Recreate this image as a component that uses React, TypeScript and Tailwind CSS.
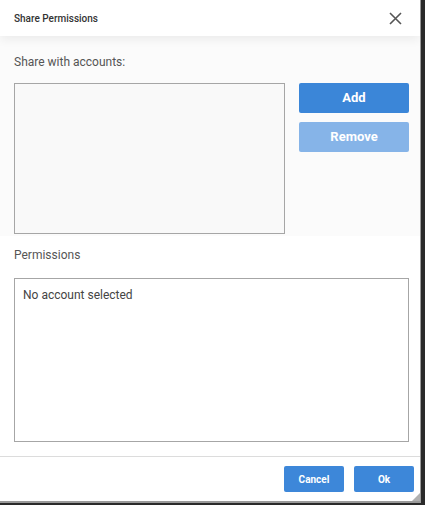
import React from 'react';

export default function App() {
  return (
    <div className="w-[425px] h-[505px] flex bg-[#2a2a2a] font-['Roboto',sans-serif]">
      <div className="w-[421px] h-[503px] flex flex-col bg-white border-r border-b-2 border-[#9a9a9a] relative">
        {/* header */}
        <div className="h-[36px] shrink-0 flex items-center justify-between pl-[14px] pr-[14px] bg-white relative z-10 shadow-[0_3px_10px_rgba(0,0,0,0.07)]">
          <span className="text-[10px] font-medium text-[#333]">Share Permissions</span>
          <svg width="13" height="13" viewBox="0 0 13 13" className="mr-[4px]">
            <path d="M1 1L12 12M12 1L1 12" stroke="#555" strokeWidth="1.6" />
          </svg>
        </div>

        {/* accounts section */}
        <div className="bg-[#fbfbfb] pl-[14px] pr-[11px] pt-[19px] pb-[2px]">
          <div className="text-[12px] text-[#555] leading-[14px]">Share with accounts:</div>
          <div className="flex mt-[14px]">
            <div className="shrink-0 w-[271px] h-[151px] border border-[#a6a6a6] bg-[#f9f9f9]" />
            <div className="shrink-0 flex flex-col gap-[9px] ml-[14px]">
              <button className="w-[110px] h-[30px] rounded-[2px] bg-[#3b86d8] text-white text-[13px] font-bold">Add</button>
              <button className="w-[110px] h-[30px] rounded-[2px] bg-[#86b4e8] text-white text-[13px] font-bold">Remove</button>
            </div>
          </div>
        </div>

        {/* permissions */}
        <div className="px-[14px] pt-[12px]">
          <div className="text-[12px] text-[#555] leading-[14px]">Permissions</div>
          <div className="mt-[16px] w-[395px] h-[164px] border border-[#a6a6a6] bg-white px-[8px] pt-[3px]">
            <span className="text-[12px] text-[#444]">No account selected</span>
          </div>
        </div>

        {/* footer */}
        <div className="mt-auto h-[45px] border-t border-[#dcdcdc] flex items-start justify-end gap-[10px] pt-[9px] pr-[6px]">
          <button className="w-[60px] h-[26px] rounded-[2px] bg-[#3d87d9] text-white text-[10px] font-bold">Cancel</button>
          <button className="w-[60px] h-[26px] rounded-[2px] bg-[#3d87d9] text-white text-[10px] font-bold">Ok</button>
        </div>

        <svg width="8" height="8" viewBox="0 0 8 8" className="absolute right-0 bottom-0">
          <path d="M8 0L8 8L0 8Z" fill="#b0b0b0" />
        </svg>
      </div>
    </div>
  );
}
